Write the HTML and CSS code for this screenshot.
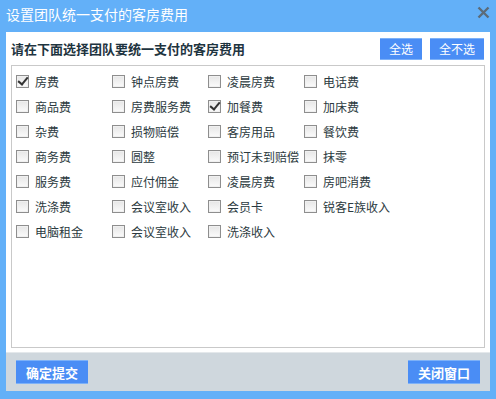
FILE: index.html
```html
<!DOCTYPE html>
<html lang="zh-CN">
<head>
<meta charset="utf-8">
<title>设置团队统一支付的客房费用</title>
<link rel="stylesheet" href="styles.css">
</head>
<body>
<div class="dialog">
  <div class="titlebar">
    <span class="title">设置团队统一支付的客房费用</span>
    <svg class="close" width="13" height="13" viewBox="0 0 13 13"><path d="M1.5 1.5 L11.5 11.5 M11.5 1.5 L1.5 11.5" stroke="#5c6b78" stroke-width="2.4" fill="none"/></svg>
  </div>
  <div class="panel">
    <div class="header">
      <span class="heading">请在下面选择团队要统一支付的客房费用</span>
      <div class="actions">
        <button class="btn btn-sm">全选</button>
        <button class="btn btn-md">全不选</button>
      </div>
    </div>
    <div class="box">
      <div class="grid">
        <label class="item"><span class="cb checked"></span>房费</label>
        <label class="item"><span class="cb"></span>钟点房费</label>
        <label class="item"><span class="cb"></span>凌晨房费</label>
        <label class="item"><span class="cb"></span>电话费</label>
        <label class="item"><span class="cb"></span>商品费</label>
        <label class="item"><span class="cb"></span>房费服务费</label>
        <label class="item"><span class="cb checked"></span>加餐费</label>
        <label class="item"><span class="cb"></span>加床费</label>
        <label class="item"><span class="cb"></span>杂费</label>
        <label class="item"><span class="cb"></span>损物赔偿</label>
        <label class="item"><span class="cb"></span>客房用品</label>
        <label class="item"><span class="cb"></span>餐饮费</label>
        <label class="item"><span class="cb"></span>商务费</label>
        <label class="item"><span class="cb"></span>圆整</label>
        <label class="item"><span class="cb"></span>预订未到赔偿</label>
        <label class="item"><span class="cb"></span>抹零</label>
        <label class="item"><span class="cb"></span>服务费</label>
        <label class="item"><span class="cb"></span>应付佣金</label>
        <label class="item"><span class="cb"></span>凌晨房费</label>
        <label class="item"><span class="cb"></span>房吧消费</label>
        <label class="item"><span class="cb"></span>洗涤费</label>
        <label class="item"><span class="cb"></span>会议室收入</label>
        <label class="item"><span class="cb"></span>会员卡</label>
        <label class="item"><span class="cb"></span>锐客E族收入</label>
        <label class="item"><span class="cb"></span>电脑租金</label>
        <label class="item"><span class="cb"></span>会议室收入</label>
        <label class="item"><span class="cb"></span>洗涤收入</label>
      </div>
    </div>
    <div class="footer">
      <button class="btn btn-lg">确定提交</button>
      <button class="btn btn-lg">关闭窗口</button>
    </div>
  </div>
</div>
</body>
</html>
```

FILE: styles.css
```css
* { box-sizing: border-box; }
html, body { margin: 0; padding: 0; }
body {
  width: 496px;
  height: 399px;
  background: #63b0f8;
  font-family: "Noto Sans CJK SC", "DejaVu Sans", sans-serif;
  font-size: 12px;
  color: #2b3a40;
  overflow: hidden;
}
.dialog {
  display: flex;
  flex-direction: column;
  height: 399px;
}
.titlebar {
  height: 32px;
  display: flex;
  align-items: flex-start;
  justify-content: space-between;
  padding: 3px 6px 0 6px;
}
.title {
  color: #ffffff;
  font-size: 14px;
  line-height: 22px;
}
.close { margin-top: 3px; }
.panel {
  margin: 0 6px;
  height: 359px;
  background: #ffffff;
  display: flex;
  flex-direction: column;
}
.header {
  height: 33px;
  display: flex;
  align-items: center;
  justify-content: space-between;
  padding: 0 6px 0 5px;
}
.heading {
  font-weight: bold;
  font-size: 13px;
  color: #1e3440;
}
.actions {
  display: flex;
  gap: 8px;
}
.btn {
  font-family: inherit;
  color: #ffffff;
  background: #4a8df5;
  border: 0;
  border-top: 1px solid #7db1f8;
  border-bottom: 1px solid #7db1f8;
  padding: 0;
  font-size: 12px;
  cursor: pointer;
}
.btn-sm { width: 42px; height: 22px; }
.btn-md { width: 54px; height: 22px; }
.btn-lg { width: 72px; height: 24px; font-weight: bold; font-size: 13px; }
.box {
  margin: 0 5px 0 5px;
  height: 283px;
  border: 1px solid #c9c9c9;
  padding: 3px 4px;
}
.grid {
  display: grid;
  grid-template-columns: repeat(4, 96px);
  grid-auto-rows: 25px;
}
.item {
  display: flex;
  align-items: center;
  gap: 6px;
  white-space: nowrap;
  color: #2b3a40;
}
.cb {
  width: 13px;
  height: 13px;
  flex: none;
  border: 1px solid #8e8e8e;
  background: linear-gradient(#e6e6e6, #fbfbfb);
  box-shadow: inset 0 0 0 1px #f0f0f0;
  position: relative;
}
.cb.checked::after {
  content: "";
  position: absolute;
  left: 3px;
  top: -1px;
  width: 4px;
  height: 8px;
  border-right: 2px solid #333;
  border-bottom: 2px solid #333;
  transform: rotate(40deg);
}
.footer {
  margin-top: 4px;
  border-top: 1px solid #e4e8eb;
  flex: 1;
  background: #cfd7dd;
  display: flex;
  align-items: center;
  justify-content: space-between;
  padding: 0 10px;
}
```
